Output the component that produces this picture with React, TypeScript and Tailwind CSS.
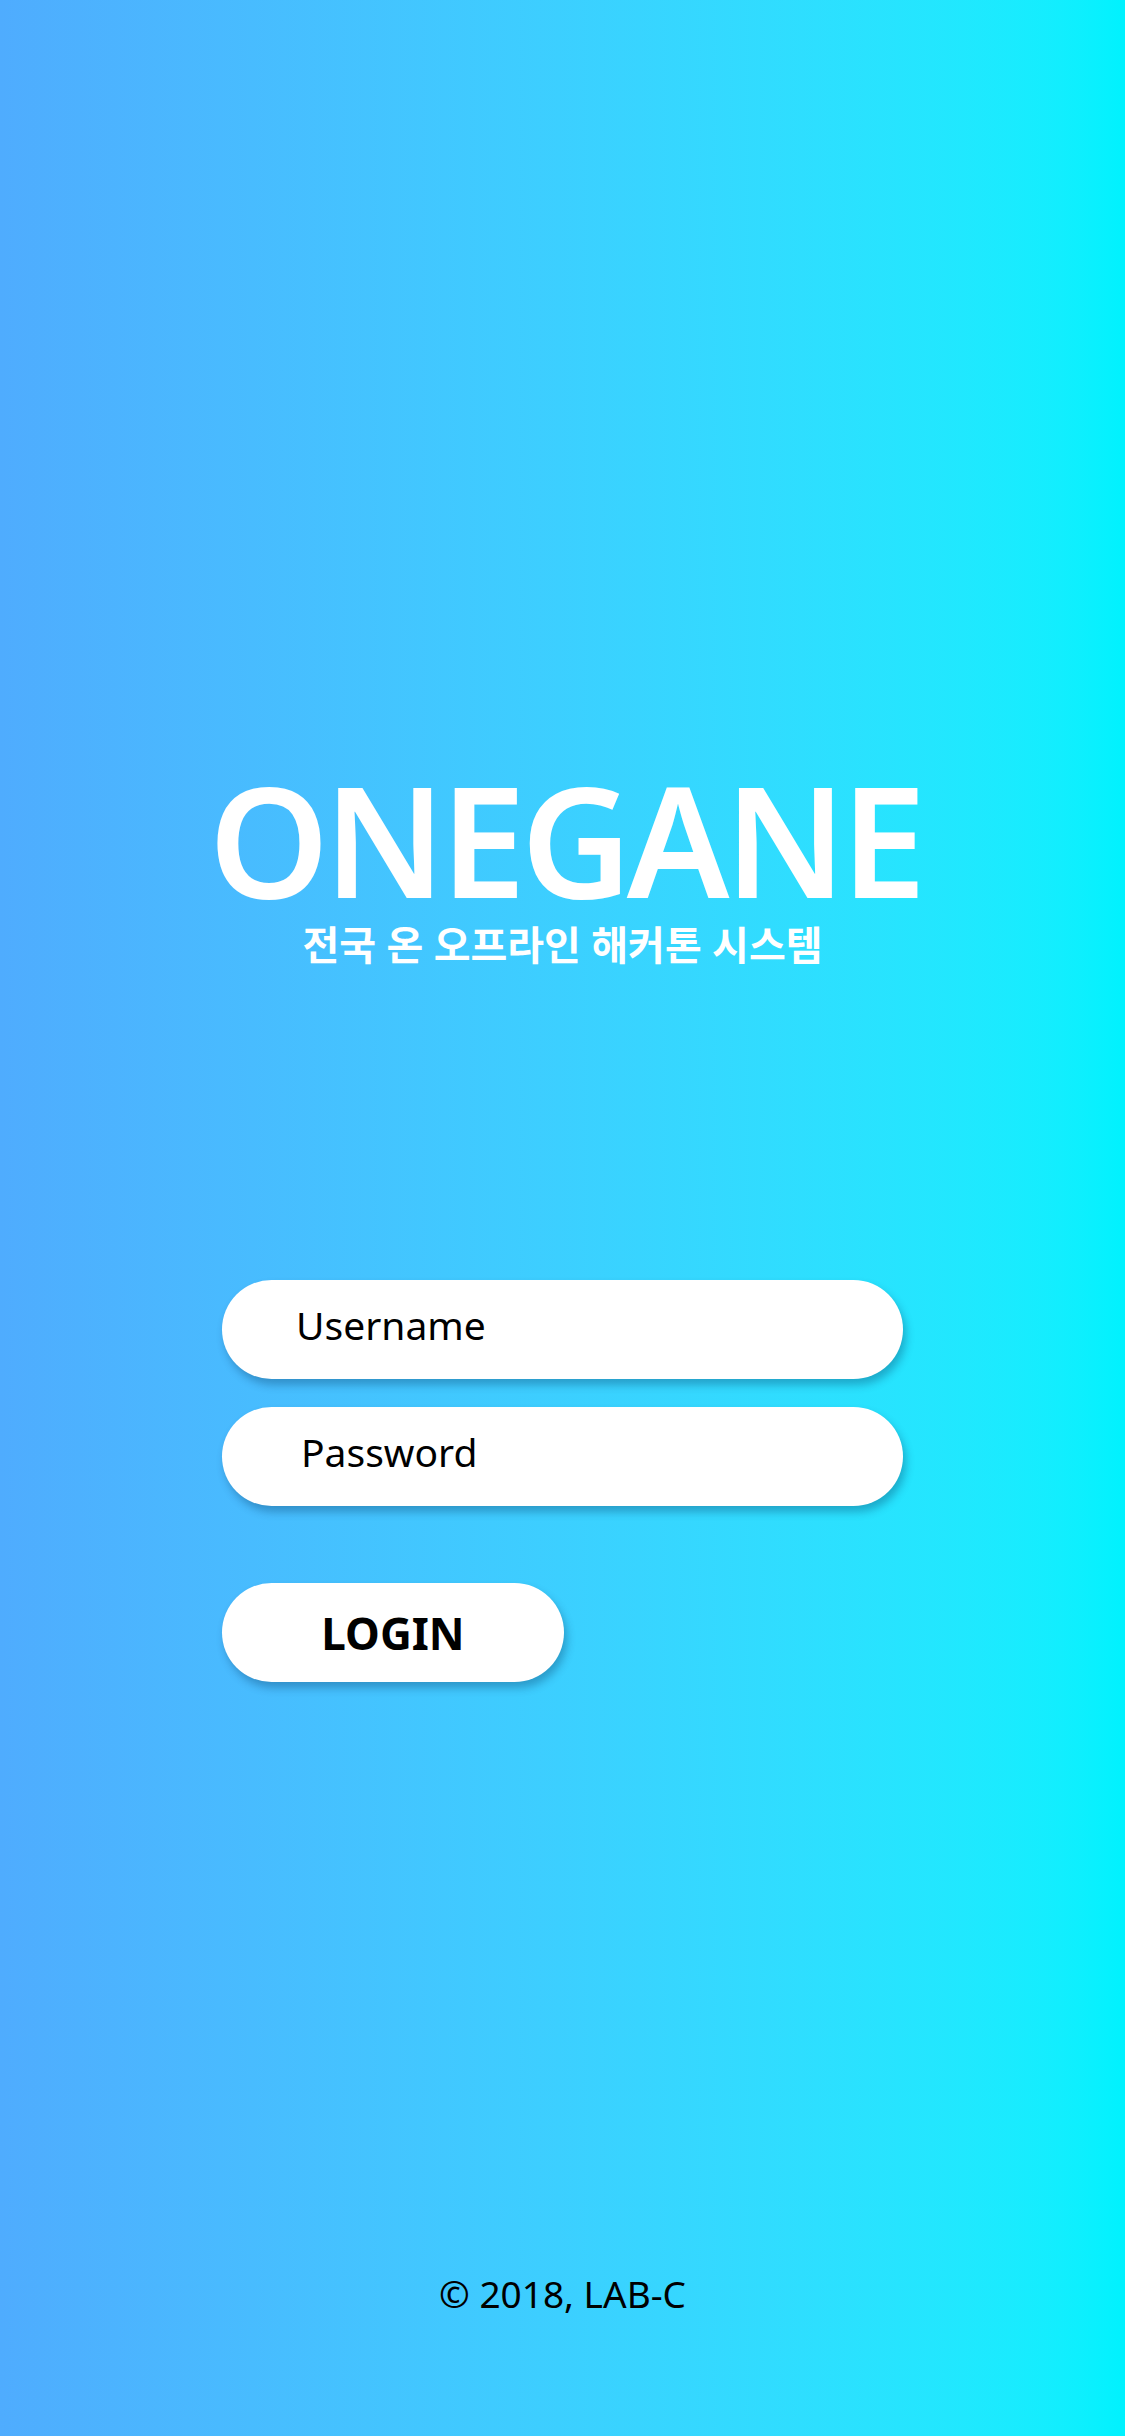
import React from "react";

const font = { fontFamily: '"Noto Sans", "Noto Sans CJK KR", sans-serif' };

const Field = ({ placeholder, indent }: { placeholder: string; indent: string }) => (
    <input
        type="text"
        placeholder={placeholder}
        className={`w-[681px] h-[99px] rounded-full bg-white ${indent} pr-8 pb-[10px] text-[39px] text-black placeholder:text-black outline-none shadow-[3px_6px_8px_rgba(0,40,80,0.3)]`}
        style={font}
    />
);

export default function App() {
    return (
        <div
            className="w-full min-h-[2436px] bg-gradient-to-r from-[#4facfe] to-[#00f2fe] flex flex-col items-center"
            style={font}
        >
            {/* Title */}
            <h1 className="mt-[779px] pl-[5px] text-[153px] leading-[120px] font-semibold text-white tracking-[-5px]">
                ONEGANE
            </h1>
            <p className="mt-[26px] text-[40px] leading-none font-bold text-white">
                전국 온 오프라인 해커톤 시스템
            </p>

            {/* Form */}
            <div className="mt-[315px] w-[681px] flex flex-col gap-[28px]">
                <Field placeholder="Username" indent="pl-[74px]" />
                <Field placeholder="Password" indent="pl-[79px]" />
                <button className="mt-[49px] w-[342px] h-[99px] rounded-full bg-white text-[44px] font-bold text-black shadow-[3px_6px_8px_rgba(0,40,80,0.3)]">
                    LOGIN
                </button>
            </div>

            <p className="mt-auto mb-[115px] text-[37px] text-black">© 2018, LAB-C</p>
        </div>
    );
}
